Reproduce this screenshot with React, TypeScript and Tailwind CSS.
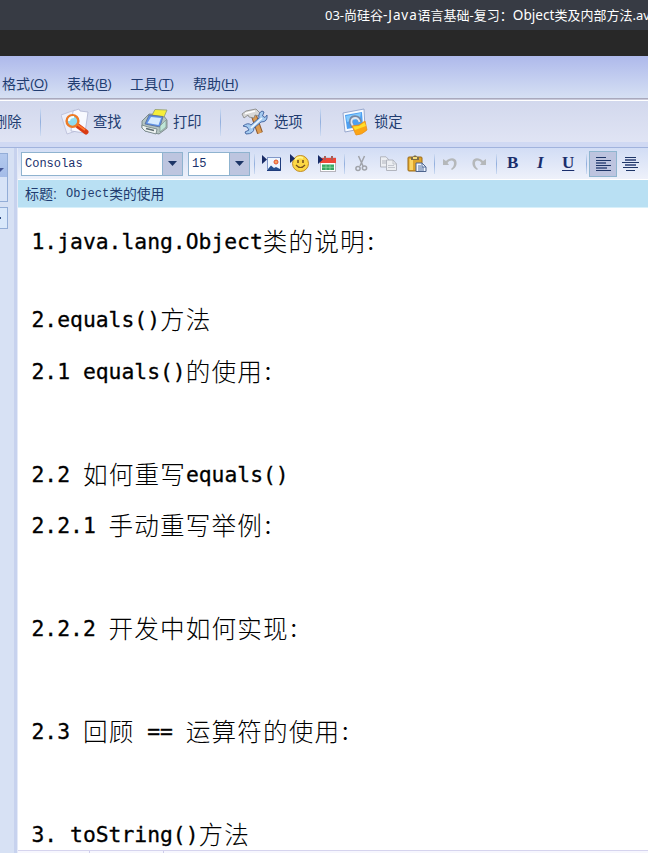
import React from 'react';

const ui = "font-['Liberation_Sans','Noto_Sans_CJK_SC',sans-serif]";

function MenuItem({ label, mnemonic, className }: { label: string; mnemonic: string; className: string }) {
  return (
    <div className={`flex shrink-0 items-center whitespace-nowrap ${className}`}>
      <span className="text-[14px] leading-5">{label}</span>
      <span className="flex text-[13px] leading-5 tracking-[-0.3px]">
        (<span className="underline underline-offset-2">{mnemonic}</span>)
      </span>
    </div>
  );
}

function Divider({ className }: { className: string }) {
  return <div className={`w-px shrink-0 bg-linear-to-b from-[#cfdcf2] via-[#91aedd] to-[#cfdcf2] ${className}`} />;
}

function SearchIcon() {
  return (
    <svg width="30" height="28" viewBox="0 0 30 28" className="shrink-0">
      <path d="M0 7 L14 2 L18 22 L6 26 Z" fill="#eceffa" stroke="#b9bdd8" strokeWidth=".8" />
      <path d="M12 3 L18 1 L19 3 L27 4 L24 25 L10 23 Z" fill="#f8f9ff" stroke="#aeb4d2" strokeWidth=".8" />
      <path d="M17 18 L25 24" stroke="#d93a12" strokeWidth="5" strokeLinecap="round" />
      <path d="M17 17 L24 22" stroke="#ff7a30" strokeWidth="1.8" />
      <circle cx="11.5" cy="13" r="5.9" fill="#8fdcf0" stroke="#ee7a26" strokeWidth="2.4" />
      <path d="M8 13 Q8 9 13 9" stroke="#f4ffff" strokeWidth="2.2" fill="none" />
    </svg>
  );
}

function PrinterIcon() {
  return (
    <svg width="28" height="28" viewBox="0 0 28 28" className="shrink-0">
      <path d="M1 13 L8 6 L22 7 L26 12 L26 20 L18 26 L4 23 L1 20 Z" fill="#b4c4c1" stroke="#6c7b7c" strokeWidth=".8" />
      <path d="M11 7 L14 1.5 L26 2 L23 9 Z" fill="#f6ee3a" stroke="#8d9a72" strokeWidth=".8" />
      <path d="M8 7 L22 8.500 L19 19 L4 16 Z" fill="#5f92e6" stroke="#5a6b92" strokeWidth=".8" />
      <path d="M10 9 L20 10 L17.500 17 L6.500 15 Z" fill="#d6eaff" />
      <path d="M1 17 L7 19 L16 21 L15 26 L4 23 L1 20 Z" fill="#eef3f2" stroke="#6c7d80" strokeWidth=".8" />
      <path d="M5 20.500 L13 22.500" stroke="#5c6b70" strokeWidth="1.6" />
      <path d="M19 18 L25 12 L25 19 L19 24 Z" fill="#bfe6d8" stroke="#80938f" strokeWidth=".7" />
    </svg>
  );
}

function ToolsIcon() {
  return (
    <svg width="28" height="28" viewBox="0 0 28 28" className="shrink-0">
      <path d="M13 8 L19 25" stroke="#8c572a" strokeWidth="6" />
      <path d="M13 8 L19 25" stroke="#dc9b51" strokeWidth="4" />
      <path d="M1 6 L5 3 L15 1 L19 5 L18 8 L14 7 L13 10 L8 9 L7 7 L3 10 Z" fill="#d9d9d8" stroke="#81827f" strokeWidth=".8" />
      <path d="M4 5.500 L14 3" stroke="#fff" strokeWidth="1.5" />
      <path d="M2 18 Q7 14 10 17 L18 10 Q17 5 21 3 L23 4 L21.500 8 L24 9.500 L26 7 Q27 14 20 14 L13 20 Q13 26 5 26 L4 24 L8 22 L6 19 Z" fill="#a5cbf0" stroke="#3c5f9c" strokeWidth=".9" />
      <path d="M10 20 L21 10" stroke="#f1f8ff" strokeWidth="1.6" />
    </svg>
  );
}

function LockIcon() {
  return (
    <svg width="28" height="28" viewBox="0 0 28 28" className="shrink-0">
      <path d="M1 5 L22 1 L23 20 L3 24 Z" fill="#f8fbff" stroke="#8ea0ca" strokeWidth=".9" />
      <path d="M3 7 L20 4 L21 18 L5 21 Z" fill="#4e9ff0" />
      <path d="M4 8 L19 5 L18 10 L5 14 Z" fill="#83cbff" />
      <path d="M11 19 L9 15 Q8 9 13 9 Q17 9 18 14" fill="none" stroke="#7787a3" strokeWidth="3.6" />
      <path d="M11 18 L9.500 15 Q9 10 13 10 Q16.500 10 17.500 14" fill="none" stroke="#dfe7f2" strokeWidth="1.8" />
      <path d="M10 18 L17 17 L23 13 L25 22 Q20 27 14 27 Z" fill="#fca514" stroke="#e7901c" strokeWidth=".8" />
      <path d="M11 18.500 L17 18 L22.500 14.500 L24 18 L13 22 Z" fill="#ffdf2a" />
    </svg>
  );
}

function ImageIcon() {
  return (
    <svg width="20" height="18" viewBox="0 0 20 18" className="shrink-0">
      <path d="M0 0 L5 4.500 L0 9 Z" fill="#182b66" />
      <rect x="5.5" y="2.5" width="13" height="13" fill="#eef6ff" stroke="#8298c8" />
      <path d="M5 15.500 H18.500 V3" fill="none" stroke="#1f3c7c" />
      <circle cx="14" cy="7" r="2" fill="#f6a55f" stroke="#e4512e" />
      <path d="M6 14 L9 10.500 L12 13 L14 12 L18 14 V15 H6 Z" fill="#27508f" />
    </svg>
  );
}

function SmileIcon() {
  return (
    <svg width="20" height="19" viewBox="0 0 20 19" className="shrink-0">
      <circle cx="10.5" cy="9.5" r="8" fill="#fcd744" stroke="#c18b25" />
      <path d="M5 6 Q8 2 13 4" stroke="#fff58f" strokeWidth="2" fill="none" />
      <path d="M6 11 Q10.5 16 15 11" stroke="#75501d" strokeWidth="1.2" fill="none" />
      <path d="M8 6 V9 M13 6 V9" stroke="#6e4b1b" strokeWidth="1.5" />
      <path d="M0 0 L5 4.500 L0 9 Z" fill="#182b66" />
    </svg>
  );
}

function CalendarIcon() {
  return (
    <svg width="19" height="18" viewBox="0 0 19 18" className="shrink-0">
      <rect x="2.5" y="3" width="15" height="13.5" fill="#fff" stroke="#b6b4bb" />
      <path d="M2 3 H18 V8 H2 Z" fill="#ee4638" />
      <path d="M7 1 V5 M14 1 V5" stroke="#a75f59" strokeWidth="2" />
      <path d="M4 9.500 H16 V15 H4 Z" fill="#36a762" />
      <path d="M4 12.250 H16 M8 9 V15 M12 9 V15" stroke="#9cdcaa" strokeWidth=".7" />
      <path d="M0 0 L5 4.500 L0 9 Z" fill="#182b66" />
    </svg>
  );
}

function CutIcon() {
  return (
    <svg width="13" height="17" viewBox="0 0 13 17" className="shrink-0" fill="none" stroke="#a0a3aa" strokeWidth="1.5">
      <path d="M3.500 1 L8 11 M9.500 1 L5 11" />
      <ellipse cx="3" cy="13.500" rx="2.1" ry="2" />
      <ellipse cx="9.500" cy="13" rx="2.1" ry="2" />
    </svg>
  );
}

function CopyIcon() {
  return (
    <svg width="19" height="16" viewBox="0 0 19 16" className="shrink-0" fill="#eceef2" stroke="#b2b5be">
      <path d="M1.500 .8 H7 L10 4 V11 H1.500 Z" />
      <path d="M3 5 H8 M3 7 H8" />
      <path d="M7.500 4 H14 L17.500 8 V14.500 H7.500 Z" />
      <path d="M14 4 V8 H18 M9 9.500 H15 M9 11.500 H16" fill="none" strokeWidth=".7" />
    </svg>
  );
}

function PasteIcon() {
  return (
    <svg width="20" height="18" viewBox="0 0 20 18" className="shrink-0">
      <rect x="1" y="2" width="14" height="14" rx="1" fill="#dea42c" stroke="#9c6b17" />
      <rect x="2.500" y="4" width="3.500" height="11" fill="#fbd565" />
      <path d="M4 5 V2 H6 L7 .5 H9 L10 2 H12 V5 Z" fill="#7b6c4a" />
      <rect x="6" y="2" width="4" height="2" fill="#f4dc7a" />
      <path d="M9 8 H15 L19 12 V16.5 H9 Z" fill="#eef5ff" stroke="#4d638c" />
      <path d="M15 8 V12 H19 M11 11 H14 M11 13 H17 M11 15 H17" fill="none" stroke="#54719f" />
    </svg>
  );
}

function UndoIcon({ flip = false }: { flip?: boolean }) {
  return (
    <svg width="14" height="15" viewBox="0 0 14 15" className={`shrink-0 ${flip ? '-scale-x-100' : ''}`}>
      <path d="M0 3 V9 H6 L4.500 7 C7 3.500 11 4 11 7 C11 10 10 11 8 13 L9 14 C12 12 14 10 13.500 6 C13 1.500 7 1 3 5 Z" fill="#b5b8ba" />
    </svg>
  );
}

function AlignIcon({ center = false }: { center?: boolean }) {
  return (
    <svg width="17" height="14" viewBox="0 0 17 14" className="shrink-0" stroke="#1e3567">
      {center ? (
        <>
          <path d="M3 .5 H14 M0 5.5 H17 M1 10.5 H16 M4 13.5 H13" />
          <path d="M3 3 H14 M3 8 H14" stroke="#576895" strokeWidth="2" />
        </>
      ) : (
        <>
          <path d="M1 .5 H11 M1 3.5 H16 M1 8.5 H16 M1 13.5 H16" />
          <path d="M1 6 H11 M1 11 H12" stroke="#576895" strokeWidth="2" />
        </>
      )}
    </svg>
  );
}

function Select({ value, className }: { value: string; className: string }) {
  return (
    <div className={`flex h-[24px] shrink-0 border border-[#8fb3cf] bg-white ${className}`}>
      <div className="flex-1 pl-[3px] font-['Liberation_Mono',monospace] text-[12px] leading-[22px] whitespace-nowrap text-[#18306b]">{value}</div>
      <div className="flex w-[20px] items-center justify-center border-l border-[#8fb3cf] bg-[#bdc5df]">
        <svg width="9" height="5" viewBox="0 0 9 5"><path d="M0 0 H9 L4.5 5 Z" fill="#1d3566" /></svg>
      </div>
    </div>
  );
}

function Line({ text, className = 'h-[51.5px]' }: { text: string; className?: string }) {
  const runs = text.match(/[\x20-\x7e]+|：|[^\x20-\x7e：]+/g) ?? [];
  return (
    <div className={`flex shrink-0 items-start whitespace-pre ${className}`}>
      {runs.map((run, i) => {
        if (/^[\x20-\x7e]/.test(run)) {
          return <span key={i} className="font-['DejaVu_Sans_Mono',monospace] text-[21.35px] leading-[28px] [-webkit-text-stroke:0.3px_black]">{run}</span>;
        }
        if (run === '：') {
          return <span key={i} className="font-['Noto_Sans_CJK_SC',sans-serif] text-[20px] leading-[28px] font-normal">{run}</span>;
        }
        return <span key={i} className="font-['Noto_Sans_CJK_SC',sans-serif] text-[24.6px] leading-[25px] font-light tracking-[1.15px]">{run}</span>;
      })}
    </div>
  );
}

export default function App() {
  return (
    <div className={`flex h-[853px] w-[648px] flex-col overflow-hidden bg-white text-[#213c70] ${ui}`}>
      <header className="flex h-[30px] shrink-0 bg-[#373b44] pl-[325px] font-['Noto_Sans','Noto_Sans_CJK_SC',sans-serif] text-[13px] leading-[30px] whitespace-nowrap text-white">
        <span>03-尚硅谷</span>
        <span className="text-[13.5px] tracking-[0.9px]">-Java</span>
        <span>语言基础-</span>
        <span className="w-[39.5px]">复习：</span>
        <span className="w-[42px] text-[13.6px]">Object</span>
        <span>类及内部方法.avi</span>
      </header>
      <div className="h-[26px] shrink-0 bg-[#282828]" />

      <nav className="flex h-[42px] shrink-0 items-center bg-linear-to-b from-[#aeb9eb] to-[#d6e0f3] pt-[14px] pl-[2px]">
        <MenuItem label="格式" mnemonic="O" className="w-[65px]" />
        <MenuItem label="表格" mnemonic="B" className="w-[63px]" />
        <MenuItem label="工具" mnemonic="T" className="w-[63px]" />
        <MenuItem label="帮助" mnemonic="H" className="w-[63px]" />
      </nav>
      <div className="h-[3px] shrink-0 border-t border-b border-t-[#a9a9bd] border-b-white bg-[#c9c9d8]" />

      <div className="flex h-[41px] shrink-0 items-center bg-linear-to-b from-[#d2d8ed] to-[#e0e4f4] text-[14.3px] leading-5 whitespace-nowrap">
        <span className="-ml-[7px] w-[47px] shrink-0 pt-px">删除</span>
        <Divider className="h-[28px]" />
        <div className="flex w-[179px] shrink-0 items-center pl-[20px]">
          <SearchIcon />
          <span className="ml-[2px] w-[48px] shrink-0 pt-px">查找</span>
          <PrinterIcon />
          <span className="ml-[4px] pt-px">打印</span>
        </div>
        <Divider className="h-[28px]" />
        <div className="flex w-[99px] shrink-0 items-center pl-[20px]">
          <ToolsIcon />
          <span className="ml-[5px] pt-px">选项</span>
        </div>
        <Divider className="h-[28px]" />
        <div className="flex items-center pl-[21px]">
          <LockIcon />
          <span className="ml-[4px] pt-px">锁定</span>
        </div>
      </div>
      <div className="h-[6px] shrink-0 border-b border-[#a1b3dd] bg-[#d0d9f3]" />

      <div className="flex min-h-0 flex-1">
        <aside className="w-[14px] shrink-0 bg-[#d7e1f4] pt-[5px]">
          <div className="h-[49px] w-[8px] border-y border-r border-[#93add7] bg-[#d7e3f7]">
            <div className="flex h-[23px] items-center bg-linear-to-b from-[#b3c9ee] to-[#a4bce8]">
              <svg width="4" height="4" viewBox="0 0 4 4" className="mt-[9px]"><path d="M0 0 H4 L0 4 Z" fill="#445796" /></svg>
            </div>
          </div>
          <div className="mt-[5px] flex h-[22px] w-[8px] items-center border-y border-r border-[#93add7] bg-[#d9e8fb]">
            <div className="h-[2px] w-px bg-[#29467e]" />
          </div>
        </aside>
        <div className="w-[3px] shrink-0 bg-[#c7d2ee]" />
        <div className="w-px shrink-0 bg-[#e4eaf8]" />
        <main className="flex min-w-0 flex-1 flex-col bg-white">
          <div className="flex h-[31px] shrink-0 items-center bg-linear-to-b from-[#d2ddf5] to-[#eef1fa] pl-[3px]">
            <Select value="Consolas" className="w-[162px]" />
            <Select value="15" className="ml-[5px] w-[62px]" />
            <Divider className="ml-[4px] h-[20px]" />
            <div className="ml-[7px] flex w-[83px] items-center gap-[8px]"><ImageIcon /><SmileIcon /><CalendarIcon /></div>
            <Divider className="-ml-px h-[20px]" />
            <div className="ml-[10px] flex w-[79px] items-center"><CutIcon /><span className="w-[11px]" /><CopyIcon /><span className="w-[9px]" /><PasteIcon /></div>
            <Divider className="h-[20px]" />
            <div className="ml-[8px] flex w-[53px] items-center gap-[15px]"><UndoIcon /><UndoIcon flip /></div>
            <Divider className="h-[20px]" />
            <div className="flex h-[26px] w-[89px] shrink-0 pl-[10px] font-['Liberation_Serif',serif] text-[17px] leading-6 font-bold text-[#1a2e6c]">
              <span className="w-[28px]">B</span>
              <span className="w-[27px] pl-[2px] italic">I</span>
              <span className="underline underline-offset-2">U</span>
            </div>
            <Divider className="h-[20px]" />
            <div className="ml-[2px] flex h-[26px] w-[28px] shrink-0 items-center justify-center border border-[#8fb5cf] bg-[#bdc4df]"><AlignIcon /></div>
            <div className="ml-[5px]"><AlignIcon center /></div>
          </div>
          <div className="flex h-[29px] shrink-0 items-center border-t border-b border-t-white border-b-[#d8f0fa] bg-[#b9e0f3] pl-[7px] text-[13px] whitespace-nowrap">
            <span className="w-[41px] pt-[2px] text-[14px]">标题:</span>
            <span className="pt-px font-['Liberation_Mono',monospace] text-[12px]">Object</span>
            <span className="pt-[3px] text-[13.8px]">类的使用</span>
          </div>
          <article className="flex min-h-0 flex-1 flex-col overflow-hidden pt-[20px] pl-[13.5px] text-black">
            <Line text="1.java.lang.Object类的说明：" className="h-[78px]" />
            <Line text="2.equals()方法" />
            <Line text="2.1 equals()的使用：" className="h-[103px]" />
            <Line text="2.2 如何重写equals()" />
            <Line text="2.2.1 手动重写举例：" className="h-[103px]" />
            <Line text="2.2.2 开发中如何实现：" className="h-[103px]" />
            <Line text="2.3 回顾 == 运算符的使用：" className="h-[103px]" />
            <Line text="3. toString()方法" className="h-[28px]" />
          </article>
          <footer className="flex h-[3px] shrink-0 border-t border-[#d6d4ee] bg-[#f7f7fe]">
            <span className="w-[72px] border-r border-[#cfcdeb]" />
            <span className="w-[74px] border-r border-[#cfcdeb]" />
          </footer>
        </main>
      </div>
    </div>
  );
}
